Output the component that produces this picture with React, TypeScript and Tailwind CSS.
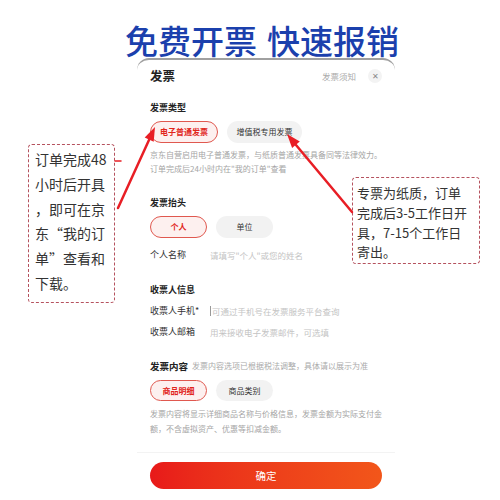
import React from "react";

const pillOn =
    "h-full rounded-full border border-[#e0584f] bg-[#fdf0ef] text-[#e1251b] font-bold flex items-center justify-center whitespace-nowrap";
const pillOff =
    "h-full rounded-full bg-[#f2f2f2] text-[#333] flex items-center justify-center whitespace-nowrap";

function Pills({ items, h }: { items: { label: string; w: string; on?: boolean }[]; h: string }) {
    return (
        <div className={`flex gap-[9px] text-[8px] ${h}`}>
            {items.map((p) => (
                <div key={p.label} className={`${p.on ? pillOn : pillOff} ${p.w}`}>
                    {p.label}
                </div>
            ))}
        </div>
    );
}

function Field({ label, hint, cursor }: { label: string; hint: string; cursor?: boolean }) {
    return (
        <div className="flex items-center h-[14px]">
            <span className="w-[60px] text-[9px] text-[#333]">{label}</span>
            {cursor && <span className="w-px h-[10px] bg-[#999] mr-[1px]" />}
            <span className="text-[8.5px] text-[#c4c4c4]">{hint}</span>
        </div>
    );
}

export default function App() {
    return (
        <div className="relative w-[500px] h-[500px] bg-white overflow-hidden [font-family:'Noto_Sans_CJK_SC','Noto_Sans',sans-serif]">
            {/* Title */}
            <div className="pt-[23px] pl-[125px] h-[58px]">
                <h1 className="flex gap-[10px] text-[33px] leading-[34px] font-medium text-[#1b40ad] whitespace-nowrap">
                    <span>免费开票</span>
                    <span>快速报销</span>
                </h1>
            </div>

            {/* Invoice sheet */}
            <div className="ml-[137px] w-[258px] rounded-t-[12px] border-t-[2px] border-[#a0a0a0] bg-white">
                <div className="px-[13px]">
                    <div className="h-[32px] flex items-center justify-between">
                        <span className="text-[12.5px] font-bold text-[#222]">发票</span>
                        <div className="flex items-center gap-[12px]">
                            <span className="text-[8.5px] text-[#aaa]">发票须知</span>
                            <span className="w-[14px] h-[14px] rounded-full bg-[#f3f3f3] text-[#888] text-[8px] flex items-center justify-center">
                                ✕
                            </span>
                        </div>
                    </div>

                    <div className="mt-[9px] h-[14px] text-[9px] font-bold text-[#222] flex items-center">发票类型</div>
                    <div className="mt-[6px]">
                        <Pills
                            h="h-[22px]"
                            items={[
                                { label: "电子普通发票", w: "w-[68px]", on: true },
                                { label: "增值税专用发票", w: "w-[75px]" },
                            ]}
                        />
                    </div>
                    <p className="mt-[5px] text-[8px] leading-[14px] text-[#a5a5a5] whitespace-nowrap">
                        京东自营启用电子普通发票，与纸质普通发票具备同等法律效力。
                        <br />
                        订单完成后24小时内在"我的订单"查看
                    </p>

                    <div className="mt-[20px] h-[14px] text-[9px] font-bold text-[#222] flex items-center">发票抬头</div>
                    <div className="mt-[6px]">
                        <Pills
                            h="h-[22px]"
                            items={[
                                { label: "个人", w: "w-[57px]", on: true },
                                { label: "单位", w: "w-[57px]" },
                            ]}
                        />
                    </div>
                    <div className="mt-[10px]">
                        <Field label="个人名称" hint={'请填写"个人"或您的姓名'} />
                    </div>

                    <div className="mt-[21px] h-[14px] text-[9px] font-bold text-[#222] flex items-center">收票人信息</div>
                    <div className="mt-[7px] flex flex-col gap-[7px]">
                        <Field label="收票人手机*" hint="可通过手机号在发票服务平台查询" cursor />
                        <Field label="收票人邮箱" hint="用来接收电子发票邮件，可选填" />
                    </div>

                    <div className="mt-[20px] h-[14px] flex items-center gap-[4px] whitespace-nowrap">
                        <span className="text-[9.5px] font-bold text-[#222]">发票内容</span>
                        <span className="text-[8px] text-[#aaa]">发票内容选项已根据税法调整，具体请以展示为准</span>
                    </div>
                    <div className="mt-[7px]">
                        <Pills
                            h="h-[21px]"
                            items={[
                                { label: "商品明细", w: "w-[57px]", on: true },
                                { label: "商品类别", w: "w-[57px]" },
                            ]}
                        />
                    </div>
                    <p className="mt-[5px] text-[8px] leading-[15px] text-[#a5a5a5] whitespace-nowrap">
                        发票内容将显示详细商品名称与价格信息，发票金额为实际支付金
                        <br />
                        额，不含虚拟资产、优惠等扣减金额。
                    </p>
                </div>

                <div className="mt-[16px] h-px bg-[#f3f3f3]" />
                <div className="px-[13px] pt-[8px]">
                    <button className="w-full h-[27px] rounded-full bg-gradient-to-r from-[#e8191a] to-[#f2561a] text-white text-[10.5px]">
                        确定
                    </button>
                </div>
            </div>

            {/* Annotations */}
            <div className="absolute left-[28px] top-[144px] w-[87px] h-[159px] border-[1.5px] border-dashed border-[#b5525e] rounded-[4px] pl-[6px] pt-[2px] text-[14px] leading-[24.8px] text-[#333] whitespace-nowrap">
                订单完成48
                <br />
                小时后开具
                <br />
                ，即可在京
                <br />
                东“我的订
                <br />
                单”查看和
                <br />
                下载。
            </div>
            <div className="absolute left-[352px] top-[177px] w-[128px] h-[87px] border-[1.5px] border-dashed border-[#b5525e] rounded-[4px] pl-[4px] pt-[5px] text-[13px] leading-[19.8px] text-[#333] bg-white whitespace-nowrap">
                专票为纸质，订单
                <br />
                完成后3-5工作日开
                <br />
                具，7-15个工作日
                <br />
                寄出。
            </div>

            <svg className="absolute inset-0 pointer-events-none" width="500" height="500" viewBox="0 0 500 500">
                <g stroke="#e81e25" strokeWidth="2.5" strokeLinecap="round">
                    <line x1="118" y1="208" x2="149" y2="140" />
                    <line x1="352" y1="212" x2="296" y2="145" />
                    <line x1="115" y1="161" x2="121" y2="161" strokeWidth="1.5" />
                </g>
                <g fill="#e81e25">
                    <polygon points="155,127 153.7,141.8 144.7,137.6" />
                    <polygon points="287,134 299.8,141.6 292.1,148" />
                </g>
            </svg>
        </div>
    );
}
